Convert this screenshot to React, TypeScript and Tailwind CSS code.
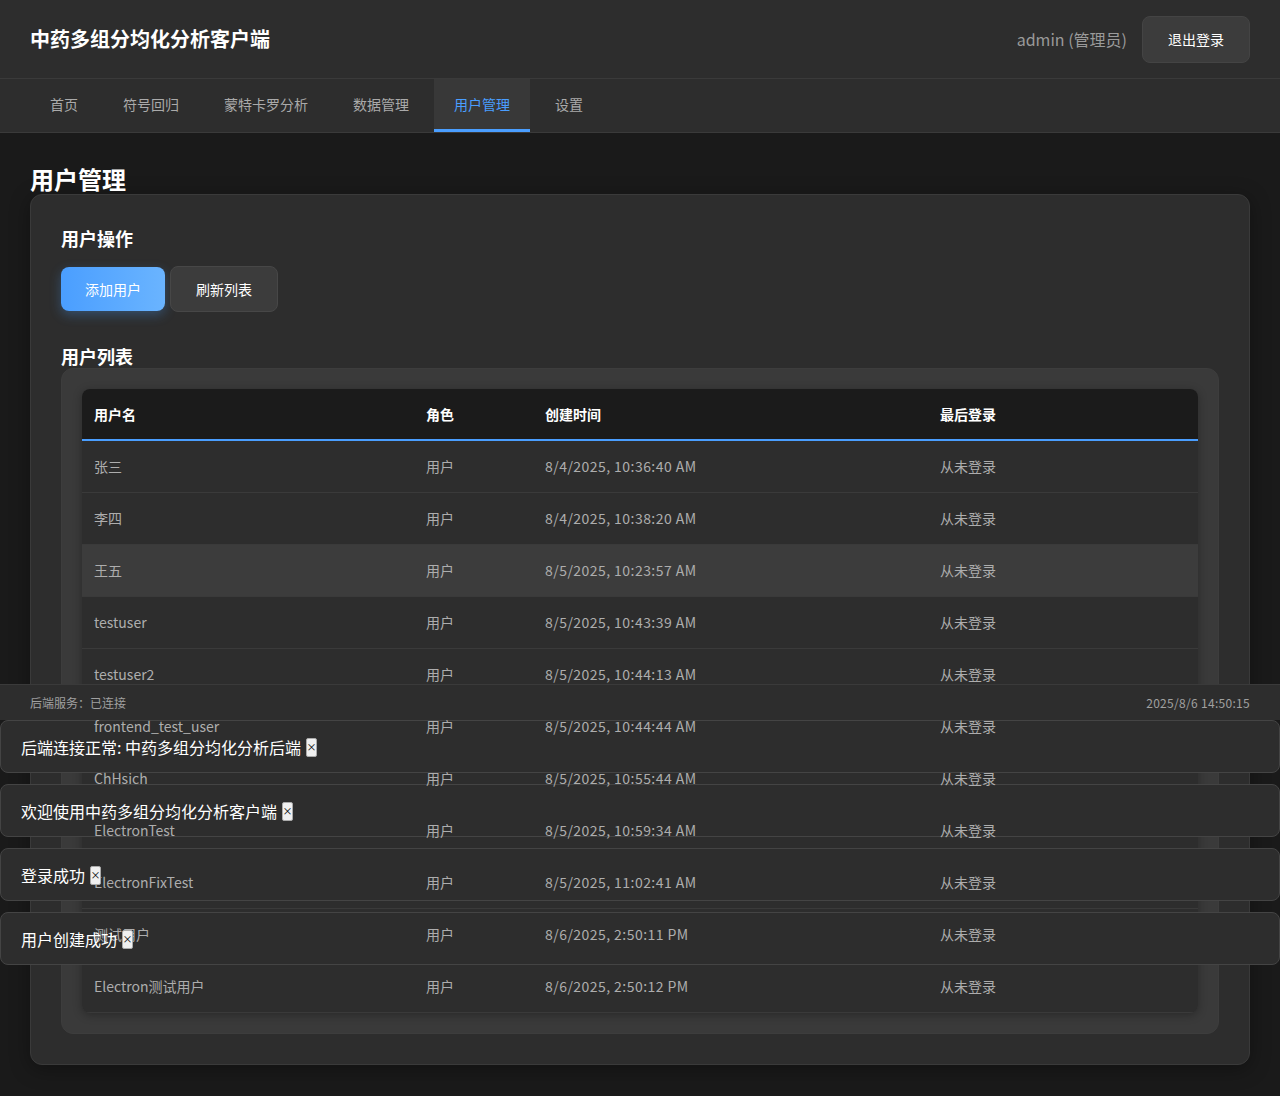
import { useState } from "react";

type UserRow = { name: string; role: string; created: string; lastLogin: string };

const users: UserRow[] = [
  { name: "张三", role: "用户", created: "8/4/2025, 10:36:40 AM", lastLogin: "从未登录" },
  { name: "李四", role: "用户", created: "8/4/2025, 10:38:20 AM", lastLogin: "从未登录" },
  { name: "王五", role: "用户", created: "8/5/2025, 10:23:57 AM", lastLogin: "从未登录" },
  { name: "testuser", role: "用户", created: "8/5/2025, 10:43:39 AM", lastLogin: "从未登录" },
  { name: "testuser2", role: "用户", created: "8/5/2025, 10:44:13 AM", lastLogin: "从未登录" },
  { name: "frontend_test_user", role: "用户", created: "8/5/2025, 10:44:44 AM", lastLogin: "从未登录" },
  { name: "ChHsich", role: "用户", created: "8/5/2025, 10:55:44 AM", lastLogin: "从未登录" },
  { name: "ElectronTest", role: "用户", created: "8/5/2025, 10:59:34 AM", lastLogin: "从未登录" },
  { name: "ElectronFixTest", role: "用户", created: "8/5/2025, 11:02:41 AM", lastLogin: "从未登录" },
  { name: "测试用户", role: "用户", created: "8/6/2025, 2:50:11 PM", lastLogin: "从未登录" },
  { name: "Electron测试用户", role: "用户", created: "8/6/2025, 2:50:12 PM", lastLogin: "从未登录" },
];

const tabs = ["首页", "符号回归", "蒙特卡罗分析", "数据管理", "用户管理", "设置"];

const toasts = [
  "后端连接正常: 中药多组分均化分析后端",
  "欢迎使用中药多组分均化分析客户端",
  "登录成功",
  "用户创建成功",
];

export default function App() {
  const [activeTab] = useState("用户管理");
  const hoveredRow = 2;

  return (
    <div
      className="relative min-h-screen bg-[#1a1a1a] text-white"
      style={{ fontFamily: '"Noto Sans CJK SC", "Noto Sans", sans-serif' }}
    >
      <header className="h-[79px] bg-[#2d2d2d] border-b border-[#3a3a3a] flex items-center justify-between pl-[30px] pr-[30px]">
        <h1 className="text-[20px] font-bold leading-none">中药多组分均化分析客户端</h1>
        <div className="flex items-center gap-[15px]">
          <span className="text-[16px] text-[#9a9a9a]">admin (管理员)</span>
          <button className="w-[108px] h-[47px] rounded-lg bg-[#3c3c3c] border border-[#444] text-[14px] text-white">
            退出登录
          </button>
        </div>
      </header>

      <nav className="h-[54px] bg-[#2d2d2d] border-b border-[#3a3a3a] flex px-[30px] gap-[5px]">
        {tabs.map((t) => (
          <div
            key={t}
            className={`h-[53px] px-5 flex items-center text-[14px] border-b-[3px] ${
              t === activeTab
                ? "bg-[#383838] text-[#4a9eff] border-[#4a9eff]"
                : "text-[#aaaaaa] border-transparent"
            }`}
          >
            {t}
          </div>
        ))}
      </nav>

      <main className="px-[30px] pt-[30px] pb-[30px]">
        <h2 className="text-[24px] font-bold leading-[31px]">用户管理</h2>
        <div className="bg-[#2d2d2d] border border-[#3a3a3a] rounded-xl p-[30px] shadow-[0_4px_20px_rgba(0,0,0,0.35)]">
          <h3 className="text-[18px] font-bold leading-[26px] mb-4">用户操作</h3>
          <div className="flex gap-[5px]">
            <button className="w-[104px] h-[44px] rounded-lg bg-gradient-to-r from-[#4a9eff] to-[#6ab4ff] text-[14px] text-white shadow-[0_4px_12px_rgba(74,158,255,0.3)]">
              添加用户
            </button>
            <button className="w-[108px] h-[46px] -mt-[1px] rounded-lg bg-[#3c3c3c] border border-[#474747] text-[14px] text-white">
              刷新列表
            </button>
          </div>

          <h3 className="text-[18px] font-bold leading-[24px] mt-8">用户列表</h3>
          <div className="bg-[#3a3a3a] border border-[#3d3d3d] rounded-xl p-5">
            <div className="rounded-lg overflow-hidden shadow-[0_2px_10px_rgba(0,0,0,0.3)]">
              <table className="w-full table-fixed border-collapse text-[14px]">
                <colgroup>
                  <col className="w-[332px]" />
                  <col className="w-[119px]" />
                  <col className="w-[395px]" />
                  <col className="w-[270px]" />
                </colgroup>
                <thead>
                  <tr className="bg-[#1b1b1b] border-b-2 border-[#4a9eff]">
                    {["用户名", "角色", "创建时间", "最后登录"].map((h) => (
                      <th key={h} className="text-left font-bold px-3 py-4 leading-[18px] text-white">
                        {h}
                      </th>
                    ))}
                  </tr>
                </thead>
                <tbody>
                  {users.map((u, i) => (
                    <tr
                      key={u.name}
                      className={`border-b border-[#3a3a3a] ${
                        i === hoveredRow ? "bg-[#3c3c3c]" : "bg-[#2d2d2d]"
                      }`}
                    >
                      <td className="px-3 py-4 leading-[19px] text-[#adadad]">
                        <span className="relative z-20">{u.name}</span>
                      </td>
                      <td className="px-3 py-4 leading-[19px] text-[#adadad]">
                        <span className="relative z-20">{u.role}</span>
                      </td>
                      <td className="px-3 py-4 leading-[19px] text-[#adadad] tracking-[0.45px]">
                        <span className="relative z-20">{u.created}</span>
                      </td>
                      <td className="px-3 py-4 leading-[19px] text-[#adadad]">
                        <span className="relative z-20">{u.lastLogin}</span>
                      </td>
                    </tr>
                  ))}
                </tbody>
              </table>
            </div>
          </div>
        </div>
      </main>

      <div className="absolute top-[684px] left-0 right-0 z-40 h-[36px] bg-[#2d2d2d] border-t border-[#3a3a3a] px-[30px] flex items-center justify-between text-[12px] text-[#a0a0a0]">
        <span>后端服务：已连接</span>
        <span className="tracking-[0.3px]">2025/8/6 14:50:15</span>
      </div>

      <div className="absolute top-[720px] left-0 w-[1280px] flex flex-col gap-[11px]">
        {toasts.map((msg) => (
          <div
            key={msg}
            className="h-[53px] bg-[#2d2d2d] border border-[#444] rounded-lg px-5 pt-[1px] flex items-center"
          >
            <span className="relative z-30 text-[16px] text-white">{msg}</span>
            <button className="relative z-30 ml-[5px] w-[11px] h-[19px] rounded-[2px] bg-[#f0f0f0] border border-[#aaa] text-black text-[10px] leading-none flex items-center justify-center">
              ×
            </button>
          </div>
        ))}
      </div>
    </div>
  );
}
